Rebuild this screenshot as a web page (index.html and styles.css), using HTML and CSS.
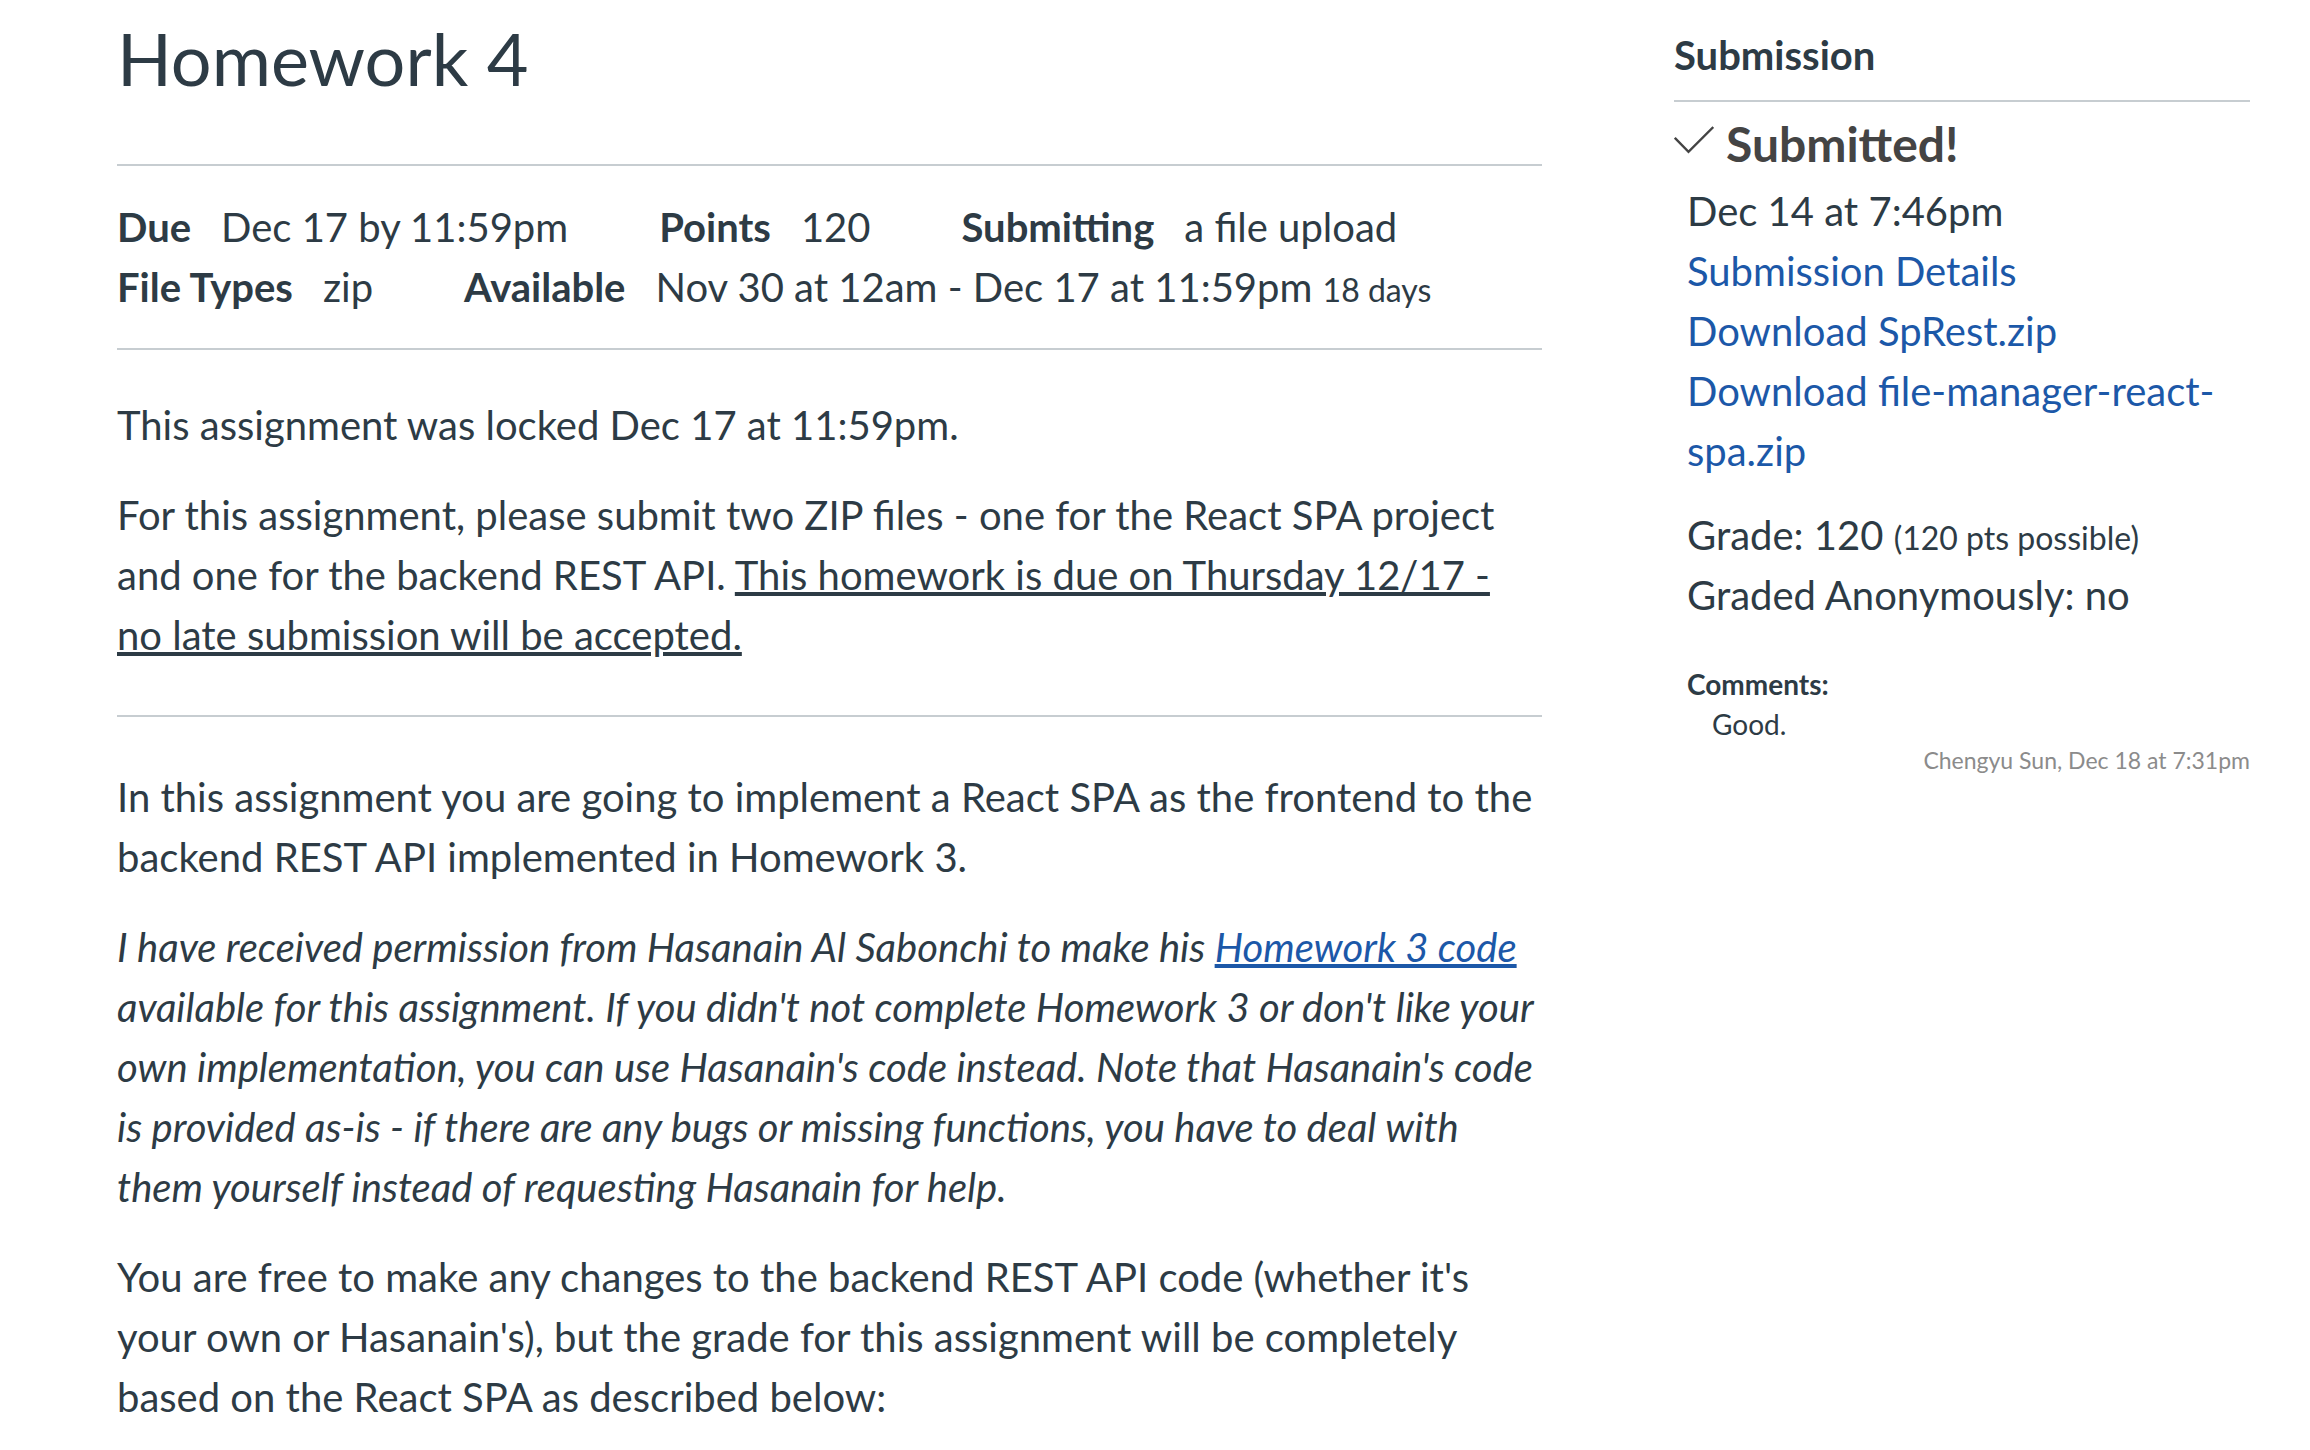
FILE: index.html
```html
<!DOCTYPE html>
<html lang="en">
<head>
<meta charset="utf-8">
<title>Homework 4</title>
<link rel="stylesheet" href="styles.css">
</head>
<body>
<div class="layout">
  <main class="content">
    <h1 class="title">Homework 4</h1>
    <ul class="details">
      <li class="detail"><span class="label">Due</span><span>Dec 17 by 11:59pm</span></li>
      <li class="detail"><span class="label">Points</span><span>120</span></li>
      <li class="detail"><span class="label">Submitting</span><span>a file upload</span></li>
      <li class="detail"><span class="label">File Types</span><span>zip</span></li>
      <li class="detail"><span class="label">Available</span><span>Nov 30 at 12am - Dec 17 at 11:59pm <small class="small">18 days</small></span></li>
    </ul>
    <section class="description">
      <p>This assignment was locked Dec 17 at 11:59pm.</p>
      <p>For this assignment, please submit two ZIP files - one for the React SPA project and one for the backend REST API. <u class="underlined">This homework is due on Thursday 12/17 - no late submission will be accepted.</u></p>
      <hr class="divider">
      <p>In this assignment you are going to implement a React SPA as the frontend to the backend REST API implemented in Homework 3.</p>
      <p><em>I have received permission from Hasanain Al Sabonchi to make his <a class="link underlined" href="#">Homework 3 code</a> available for this assignment. If you didn't not complete Homework 3 or don't like your own implementation, you can use Hasanain's code instead. Note that Hasanain's code is provided as-is - if there are any bugs or missing functions, you have to deal with them yourself instead of requesting Hasanain for help.</em></p>
      <p>You are free to make any changes to the backend REST API code (whether it's your own or Hasanain's), but the grade for this assignment will be completely based on the React SPA as described below:</p>
    </section>
  </main>
  <aside class="sidebar">
    <h2 class="sidebar-title">Submission</h2>
    <h3 class="status">
      <svg class="check" viewBox="0 0 40 28" aria-hidden="true"><path d="M.8 11.800 14.500 25.800 39.300 1" fill="none" stroke="currentColor" stroke-width="2.400"/></svg>
      Submitted!
    </h3>
    <div class="submission">
      <div>Dec 14 at 7:46pm</div>
      <a class="link block" href="#">Submission Details</a>
      <a class="link block" href="#">Download SpRest.zip</a>
      <a class="link block" href="#">Download file-manager-react-spa.zip</a>
      <div class="grade">
        <div>Grade: 120 <small class="small">(120 pts possible)</small></div>
        <div>Graded Anonymously: no</div>
      </div>
      <section class="comments">
        <h4 class="comments-title">Comments:</h4>
        <p class="comment">Good.</p>
        <p class="signature">Chengyu Sun, Dec 18 at 7:31pm</p>
      </section>
    </div>
  </aside>
</div>
</body>
</html>
```
FILE: styles.css
```css
* {
  box-sizing: border-box;
}

body {
  margin: 0;
  background: #fff;
  color: #2d3b45;
  font: 40px/60px Lato, "Liberation Sans", sans-serif;
}

h1, h2, h3, h4, p, ul {
  margin: 0;
  padding: 0;
}

.layout {
  display: flex;
  align-items: flex-start;
  gap: 132px;
  padding: 0 60px 0 117px;
}

.content {
  flex: 1;
  min-width: 0;
}

.title {
  padding: 4px 0 52px;
  font-size: 72px;
  font-weight: 400;
  line-height: 108px;
}

.details {
  display: flex;
  flex-wrap: wrap;
  column-gap: 91px;
  padding: 31px 0;
  border: solid #c7cdd1;
  border-width: 2px 0;
  list-style: none;
}

.detail {
  display: flex;
  gap: 30px;
}

.label {
  font-weight: 700;
}

.small {
  font-size: 32px;
  line-height: 32px;
}

.description {
  display: flex;
  flex-direction: column;
  gap: 30px;
  padding: 45px 0 20px;
}

.divider {
  width: 100%;
  margin: 20px 0;
  border: 0;
  border-top: 2px solid #c7cdd1;
}

.link {
  color: #1c58a8;
  text-decoration: none;
}

.block {
  display: block;
}

.underlined {
  text-decoration: underline;
  text-decoration-thickness: 4px;
}

.sidebar {
  flex: 0 1 576px;
  padding-top: 25px;
}

.sidebar-title {
  padding-bottom: 15px;
  border-bottom: 2px solid #c7cdd1;
  font-size: 40px;
  font-weight: 700;
}

.status {
  display: flex;
  align-items: center;
  gap: 12px;
  padding: 12px 0 7px;
  color: #444;
  font-size: 48px;
  font-weight: 700;
}

.check {
  width: 40px;
  height: 28px;
  margin-bottom: 8px;
}

.submission {
  padding-left: 13px;
}

.grade {
  padding-top: 24px;
}

.comments {
  padding-top: 39px;
  font-size: 28px;
  line-height: 40px;
}

.comments-title {
  font-size: 28px;
  font-weight: 700;
}

.comment {
  padding-left: 25px;
}

.signature {
  color: #8b8b8b;
  font-size: 23px;
  line-height: 32px;
  text-align: right;
}
```
